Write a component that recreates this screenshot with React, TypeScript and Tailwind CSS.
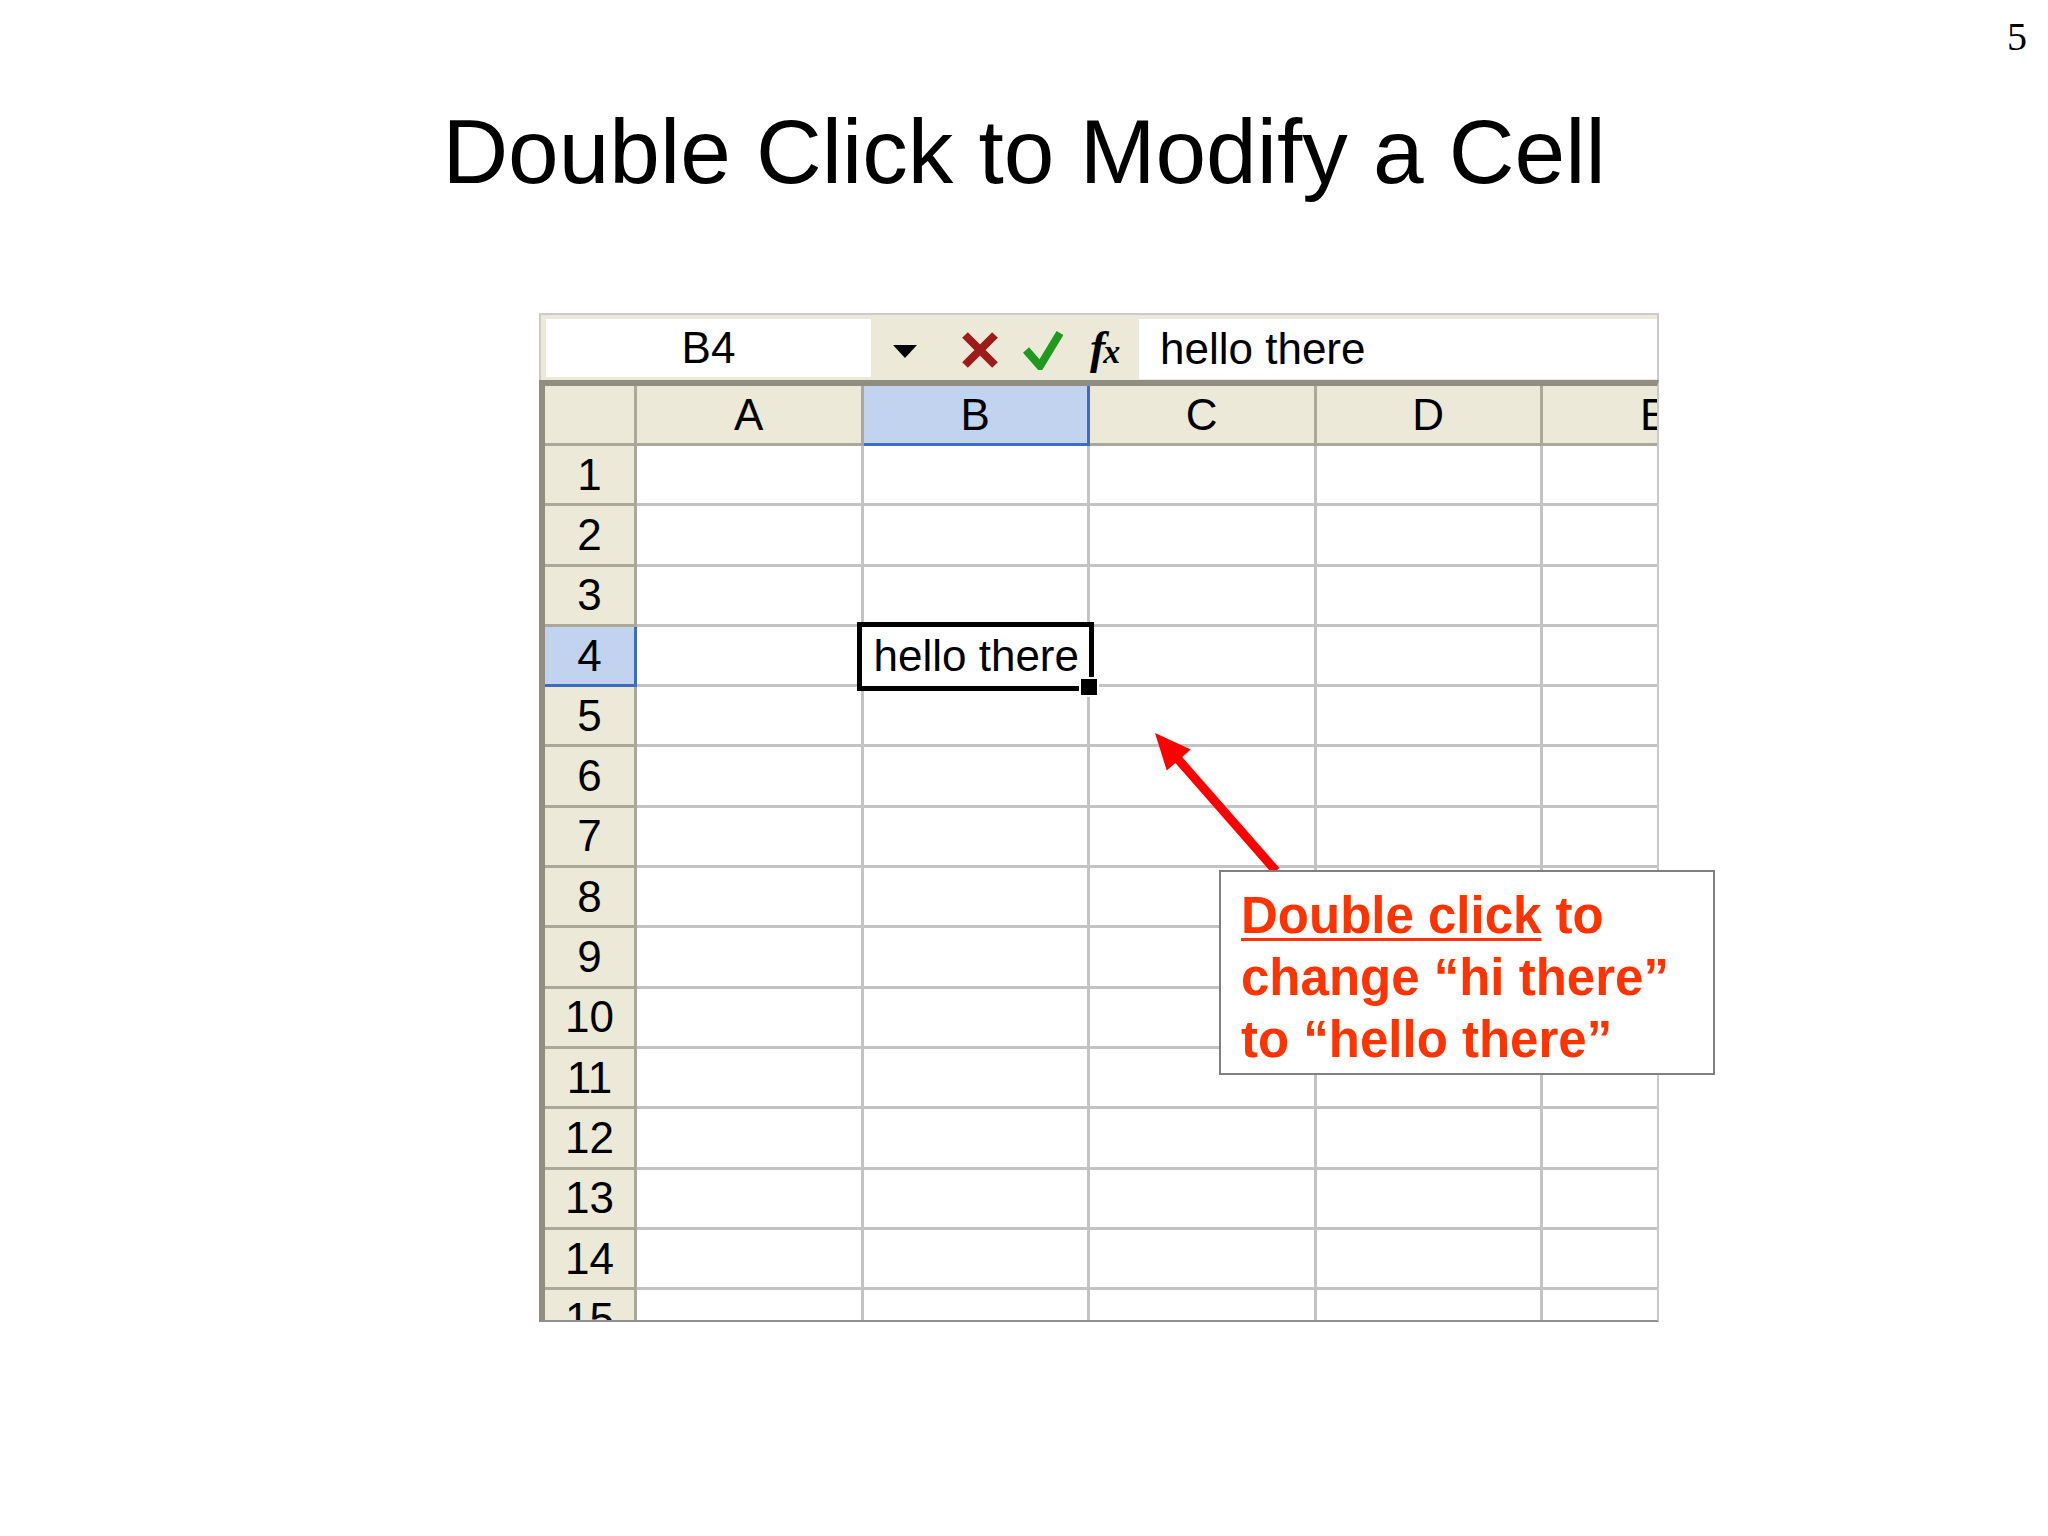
import React from "react";

const cols = ["A", "B", "C", "D", "E"];
const rows = Array.from({ length: 15 }, (_, i) => i + 1);

function FormulaBar() {
  return (
    <div className="flex h-[67px] items-start border-x-2 border-t-2 border-[#cbcbcb] bg-[#ece9d8] pt-[4px]">
      <div className="ml-[5px] flex h-[58px] w-[325px] shrink-0 items-center justify-center bg-white text-[44px] leading-none text-black">
        B4
      </div>
      {/* dropdown */}
      <svg className="ml-[22px] mt-[26px] h-[13px] w-[24px] shrink-0" viewBox="0 0 24 13">
        <polygon points="0,0 24,0 12,13" fill="#000" />
      </svg>
      {/* cancel */}
      <svg className="ml-[43px] mt-[11px] h-[40px] w-[40px] shrink-0" viewBox="0 0 40 40">
        <path d="M5 5 L35 35 M35 5 L5 35" stroke="#9e1b1b" strokeWidth="8" fill="none" />
      </svg>
      {/* enter */}
      <svg className="ml-[23px] mt-[11px] h-[40px] w-[40px] shrink-0" viewBox="0 0 40 40">
        <path d="M3 20 L17 36 L37 3" stroke="#1f9a1f" strokeWidth="8" fill="none" strokeLinejoin="miter" />
      </svg>
      {/* fx */}
      <div className="ml-[27px] mt-[6px] flex h-[46px] w-[37px] shrink-0 items-baseline font-['Liberation_Serif',serif] font-bold italic text-black">
        <span className="text-[46px] leading-none">f</span>
        <span className="-ml-[2px] text-[34px] leading-none">x</span>
      </div>
      <div className="ml-[12px] flex h-[60px] flex-1 items-center bg-white pl-[21px] text-[44px] leading-none text-black">
        hello there
      </div>
    </div>
  );
}

function Grid() {
  return (
    <div className="h-[942px] overflow-hidden border-t-[6px] border-r-2 border-b-2 border-l-[6px] border-t-[#8f8e80] border-r-[#c9c9c9] border-b-[#8f8f8f] border-l-[#8f8e80] text-[44px] leading-none text-black">
      <div className="flex h-[60px]">
        <div className="h-full w-[92px] shrink-0 border-r-[3px] border-b-[3px] border-[#aca899] bg-[#ece9d8]" />
        {cols.map((c) => (
          <div
            key={c}
            className={
              c === "B"
                ? "flex h-full w-[226.5px] shrink-0 items-center justify-center border-r-[3px] border-b-[3px] border-[#3d6cc7] bg-[#c2d3ef]"
                : "flex h-full w-[226.5px] shrink-0 items-center justify-center border-r-[3px] border-b-[3px] border-[#aca899] bg-[#ece9d8]"
            }
          >
            {c}
          </div>
        ))}
      </div>
      {rows.map((r) => (
        <div key={r} className="flex h-[60.3px]">
          <div
            className={
              r === 4
                ? "flex h-full w-[92px] shrink-0 items-center justify-center border-r-[3px] border-b-[3px] border-[#3d6cc7] bg-[#c2d3ef]"
                : "flex h-full w-[92px] shrink-0 items-center justify-center border-r-[3px] border-b-[3px] border-[#aca899] bg-[#ece9d8]"
            }
          >
            {r}
          </div>
          {cols.map((c) =>
            r === 4 && c === "B" ? (
              <div key={c} className="relative h-full w-[226.5px] shrink-0 border-r-[3px] border-b-[3px] border-[#c3c3c3]">
                <div className="absolute top-[-5px] left-[-7px] z-10 flex h-[69px] w-[237px] items-center border-[5px] border-black bg-white pl-[12px] whitespace-nowrap">
                  hello there
                </div>
                <div className="absolute top-[50px] left-[215px] z-20 h-[20px] w-[20px] border-2 border-white bg-black" />
              </div>
            ) : (
              <div key={c} className="h-full w-[226.5px] shrink-0 border-r-[3px] border-b-[3px] border-[#c3c3c3] bg-white" />
            )
          )}
        </div>
      ))}
    </div>
  );
}

export default function App() {
  return (
    <div className="relative h-[1536px] w-[2048px] overflow-hidden bg-white font-['Liberation_Sans',Arial,sans-serif] text-black">
      <div className="flex justify-end pt-[17px] pr-[21px]">
        <span className="font-['Liberation_Serif',serif] text-[40px] leading-none">5</span>
      </div>
      <h1 className="mt-[49px] text-center text-[91px] leading-none">Double Click to Modify a Cell</h1>

      <div className="mt-[116px] ml-[539px] w-[1120px]">
        <FormulaBar />
        <Grid />
      </div>

      {/* arrow */}
      <svg className="absolute top-[720px] left-[1140px] h-[160px] w-[150px]" viewBox="0 0 150 160">
        <line x1="37" y1="38" x2="136" y2="151" stroke="#ff0000" strokeWidth="9" />
        <polygon points="15,13 26.8,50.6 50.8,29.4" fill="#ff0000" />
      </svg>

      {/* callout */}
      <div className="absolute top-[870px] left-[1219px] h-[205px] w-[496px] border-2 border-[#808080] bg-white pt-[13px] pl-[20px] text-[51px] leading-[62px] font-bold text-[#ff3300]">
        <span className="underline decoration-[3px] underline-offset-[5px]">Double click</span> to
        <br />
        change “hi there”
        <br />
        to “hello there”
      </div>
    </div>
  );
}
